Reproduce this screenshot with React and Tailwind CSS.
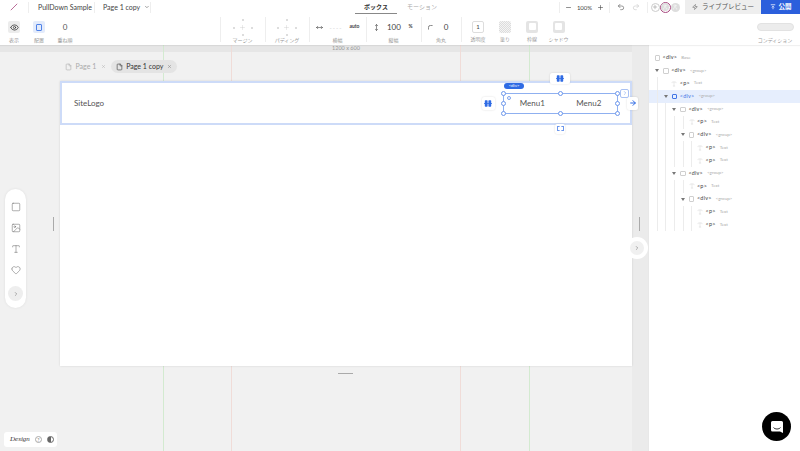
import React from 'react';
import { ArrowRight, ChevronDown, ChevronRight, Eye, File, Heart, Image, Minus, MoveHorizontal, MoveVertical, Plus, Redo2, Square, Type, Undo2, User, X, Zap } from 'lucide-react';

const jp = "font-['Lato','Noto_Sans_CJK_JP',sans-serif]";

const ToolItem = ({ label, w, top = 'pt-[3.5px]', children }) => (
  <div className={`${w} ${top} flex flex-col items-center shrink-0`}>
    <div className="w-full h-[19px] flex items-center justify-center">{children}</div>
    <span className="text-[5px] leading-[6px] text-[#9a9a9a] whitespace-nowrap">{label}</span>
  </div>
);

const Spacing = () => (
  <div className="relative w-[20px] h-[17px] text-[#c4c4c4]">
    <span className="absolute left-[9px] top-0 w-[2px] h-[2px] rounded-full bg-[#d2d2d2]" />
    <span className="absolute left-[9px] bottom-0 w-[2px] h-[2px] rounded-full bg-[#d2d2d2]" />
    <span className="absolute left-0 top-[8px] w-[2px] h-[2px] rounded-full bg-[#d2d2d2]" />
    <span className="absolute right-0 top-[8px] w-[2px] h-[2px] rounded-full bg-[#d2d2d2]" />
    <Plus className="absolute left-[6px] top-[5px] w-[7px] h-[7px]" strokeWidth={1.25} />
  </div>
);

const rows = [
  { depth: 0, tag: '<div>', note: 'Base' },
  { depth: 1, tag: '<div>', note: '<group>', arrow: true },
  { depth: 2, tag: '<p>', note: 'Text', text: true, skip: 1 },
  { depth: 2, tag: '<div>', note: '<group>', arrow: true, selected: true },
  { depth: 3, tag: '<div>', note: '<group>', arrow: true },
  { depth: 4, tag: '<p>', note: 'Text', text: true },
  { depth: 4, tag: '<div>', note: '<group>', arrow: true },
  { depth: 5, tag: '<p>', note: 'Text', text: true },
  { depth: 5, tag: '<p>', note: 'Text', text: true },
  { depth: 3, tag: '<div>', note: '<group>', arrow: true },
  { depth: 4, tag: '<p>', note: 'Text', text: true },
  { depth: 4, tag: '<div>', note: '<group>', arrow: true },
  { depth: 5, tag: '<p>', note: 'Text', text: true },
  { depth: 5, tag: '<p>', note: 'Text', text: true },
];

const TreeRow = ({ row }) => {
  const slots = Array.from({ length: row.depth }, (_, i) => i);
  return (
    <div className={`h-[12.85px] flex items-center pl-[4px] ${row.selected ? 'bg-[#e6eefd]' : ''}`}>
      {slots.map((i) => {
        const isArrow = row.arrow && i === row.depth - 1;
        const noLine = isArrow || row.skip === i;
        return (
          <span key={i} className="relative w-[8.6px] h-full shrink-0 flex items-center justify-center">
            {isArrow && <span className="w-0 h-0 border-x-[2px] border-x-transparent border-t-[3px] border-t-[#777]" />}
            {!noLine && <span className="w-px h-full bg-[#ececec]" />}
          </span>
        );
      })}
      <span className="w-[8.6px] shrink-0 flex items-center justify-center">
        {row.text ? (
          <Type className="w-[6px] h-[6px] text-[#c8c8c8]" strokeWidth={1.5} />
        ) : (
          <span className={`w-[5.5px] h-[5.5px] rounded-[1px] border ${row.selected ? 'border-[#3f74e6]' : 'border-[#cfcfcf]'}`} />
        )}
      </span>
      <span className={`ml-[1px] text-[5.5px] leading-none tracking-[0.2px] ${row.selected ? 'text-[#3f74e6]' : 'text-[#444]'}`}>{row.tag}</span>
      <span className="ml-[4px] text-[4.5px] leading-none text-[#aaa]">{row.note}</span>
    </div>
  );
};

const Dot = ({ className }) => (
  <span className={`absolute w-[5px] h-[5px] rounded-full bg-white border border-[#6d97ec] ${className}`} />
);

const PauseMark = () => (
  <svg viewBox="0 0 10 8" className="w-[8px] h-[7px] text-[#2f6be4]" fill="currentColor">
    <rect x="1" y="0" width="3.500" height="8" rx="0.8" />
    <rect x="5.500" y="0" width="3.500" height="8" rx="0.8" />
    <rect x="0" y="3.500" width="10" height="1" />
  </svg>
);

const App = () => {
  return (
    <div className={`w-[800px] h-[451px] overflow-hidden flex flex-col bg-[#f1f1f1] text-[#444] ${jp}`}>
      {/* top bar */}
      <header className="h-[14px] shrink-0 bg-white flex items-center text-[7px] relative z-20">
        <div className="w-[29px] h-[11px] flex items-center justify-center border-r border-[#eee]">
          <svg viewBox="0 0 10 10" className="w-[8px] h-[8px]"><path d="M1 9 9 1" stroke="#a8487f" strokeWidth="1" /></svg>
        </div>
        <span className="w-[66px] h-[11px] pl-[9px] border-r border-[#eee] leading-[11px] whitespace-nowrap">PullDown Sample</span>
        <div className="w-[56px] h-[11px] pl-[8px] border-r border-[#eee] flex items-center gap-[4px] whitespace-nowrap">
          Page 1 copy <ChevronDown className="w-[6px] h-[6px]" />
        </div>
        <div className="absolute left-[355px] top-0 h-[14px] w-[42px] border-b border-[#888] flex items-center justify-center text-[6px] font-bold text-[#333]">ボックス</div>
        <span className="absolute left-[407px] top-[3px] text-[6px] text-[#aaa] leading-[8px]">モーション</span>
        <div className="ml-auto flex items-center h-full">
          <div className="w-[51px] h-[11px] border-x border-[#eee] flex items-center justify-between px-[5px] text-[6px]">
            <Minus className="w-[7px] h-[7px]" />100%<Plus className="w-[7px] h-[7px]" />
          </div>
          <div className="w-[38px] h-[11px] border-r border-[#eee] flex items-center justify-center gap-[7px]">
            <Undo2 className="w-[8px] h-[8px] text-[#666]" />
            <Redo2 className="w-[8px] h-[8px] text-[#ccc]" />
          </div>
          <div className="w-[37px] pl-[2.5px] flex items-center">
            <span className="w-[9px] h-[9px] rounded-full border border-[#ccc] flex items-center justify-center"><Plus className="w-[6px] h-[6px] text-[#888]" /></span>
            <span className="w-[11px] h-[11px] rounded-full border border-[#a8487f] bg-white flex items-center justify-center"><span className="w-[8px] h-[8px] rounded-full bg-[#ddd] flex items-center justify-center"><User className="w-[6px] h-[6px] text-white" /></span></span>
            <span className="w-[9px] h-[9px] rounded-full bg-[#ddd] flex items-center justify-center"><User className="w-[6px] h-[6px] text-white" /></span>
          </div>
          <div className="w-[76px] h-full bg-[#eeeeee] flex items-center justify-center gap-[4px] text-[6.5px] text-[#555]">
            <Zap className="w-[6px] h-[6px]" />ライブプレビュー
          </div>
          <div className="w-[39px] h-full bg-[#2b5fdc] flex items-center justify-center gap-[3px] text-[6.5px] text-white font-bold">
            <svg viewBox="0 0 8 8" className="w-[6px] h-[6px]"><path d="M1 1h6M4 7V3M2.500 4.500 4 3l1.500 1.500" stroke="white" fill="none" /></svg>公開
          </div>
        </div>
      </header>

      {/* property toolbar */}
      <div className="h-[31px] shrink-0 bg-white flex items-start pl-[1.5px] shadow-[0_1px_1px_rgba(0,0,0,0.06)] relative z-20">
        <ToolItem label="表示" w="w-[25px]">
          <span className="w-[12px] h-[12px] rounded-[2px] bg-[#ececec] flex items-center justify-center"><Eye className="w-[9px] h-[9px] text-[#333]" /></span>
        </ToolItem>
        <ToolItem label="配置" w="w-[25px]">
          <span className="w-[12px] h-[12px] rounded-[2px] bg-[#e3ebfb] flex items-center justify-center"><span className="w-[6px] h-[7px] rounded-[1px] border border-[#4f82e8]" /></span>
        </ToolItem>
        <ToolItem label="重ね順" w="w-[27px]"><span className="text-[8px] text-[#555]">0</span></ToolItem>
        <div className="w-[141px] shrink-0" />
        <div className="w-[45px] h-[25px] mt-[3px] border-l border-[#eee]">
          <ToolItem label="マージン" w="w-full" top="pt-[0.5px]"><Spacing /></ToolItem>
        </div>
        <div className="w-[44px] h-[25px] mt-[3px] border-l border-[#eee]">
          <ToolItem label="パディング" w="w-full" top="pt-[0.5px]"><Spacing /></ToolItem>
        </div>
        <div className="w-[57px] h-[25px] mt-[3px] border-l border-[#eee]">
          <ToolItem label="横幅" w="w-full" top="pt-[0.5px]">
            <div className="w-full flex items-center justify-between px-[6px]">
              <MoveHorizontal className="w-[7px] h-[7px]" />
              <span className="text-[6px] text-[#ccc] tracking-[1px]">----</span>
              <span className="text-[5px] font-bold">auto</span>
            </div>
          </ToolItem>
        </div>
        <div className="w-[55px] h-[25px] mt-[3px] border-l border-[#eee]">
          <ToolItem label="縦幅" w="w-full" top="pt-[0.5px]">
            <div className="w-full flex items-center justify-between px-[6px] pr-[8px]">
              <MoveVertical className="w-[7px] h-[7px]" />
              <span className="text-[8px]">100</span>
              <span className="text-[5px] font-bold">%</span>
            </div>
          </ToolItem>
        </div>
        <div className="w-[40px] h-[25px] mt-[3px] border-l border-[#eee]">
          <ToolItem label="角丸" w="w-full" top="pt-[0.5px]">
            <div className="flex items-center gap-[11px] mr-[6px]">
              <svg viewBox="0 0 6 6" className="w-[5px] h-[5px]"><path d="M.5 5.500V3A2.500 2.500 0 0 1 3 .5h2.500" stroke="#666" fill="none" /></svg>
              <span className="text-[8px]">0</span>
            </div>
          </ToolItem>
        </div>
        <div className="h-[25px] mt-[3px] border-l border-[#eee] pl-[3px] flex">
          <ToolItem label="透明度" w="w-[27px]" top="pt-[0.5px]">
            <span className="w-[12px] h-[12px] rounded-[2px] border border-[#ddd] flex items-center justify-center text-[6px]">1</span>
          </ToolItem>
          <ToolItem label="塗り" w="w-[27px]" top="pt-[0.5px]">
            <span className="w-[12px] h-[12px] rounded-[2px] bg-[repeating-conic-gradient(#dcdcdc_0_25%,#f4f4f4_0_50%)] bg-[length:2px_2px]" />
          </ToolItem>
          <ToolItem label="枠線" w="w-[27px]" top="pt-[0.5px]">
            <span className="w-[12px] h-[12px] rounded-[2px] bg-[#e4e4e4] flex items-center justify-center"><span className="w-[7px] h-[7px] bg-white rounded-[1px]" /></span>
          </ToolItem>
          <ToolItem label="シャドウ" w="w-[26px]" top="pt-[0.5px]">
            <span className="w-[12px] h-[12px] rounded-[2px] bg-[#e4e4e4] flex items-center justify-center"><span className="w-[7px] h-[7px] bg-white rounded-[1px]" /></span>
          </ToolItem>
        </div>
        <div className="ml-auto mr-[5px]">
          <ToolItem label="コンディション" w="w-[40px]">
            <span className="w-[37px] h-[8px] rounded-full bg-[#ececec] border border-[#e2e2e2]" />
          </ToolItem>
        </div>
      </div>

      <div className="flex-1 flex min-h-0">
        {/* canvas */}
        <main className="relative w-[648px] h-full overflow-hidden">
          <div className="h-[7px] bg-[#e6e6e6] text-[5.5px] leading-[7px] text-[#999] text-center pl-[44px]">1200 x 600</div>

          {/* guide lines */}
          <span className="absolute left-[163px] top-0 bottom-0 w-px bg-[#d3ead0]" />
          <span className="absolute left-[231px] top-0 bottom-0 w-px bg-[#f0dcd8]" />
          <span className="absolute left-[460px] top-0 bottom-0 w-px bg-[#f0dcd8]" />
          <span className="absolute left-[529px] top-0 bottom-0 w-px bg-[#d3ead0]" />
          <span className="absolute left-[632px] top-0 bottom-0 w-[16px] bg-[#ebebeb]" />

          {/* page tabs */}
          <div className="relative h-[29px] pl-[65px] flex items-center gap-[5px] text-[7px]">
            <div className="flex items-center gap-[3.5px] text-[#aaa]">
              <File className="w-[7px] h-[8px]" />Page 1<X className="w-[5px] h-[5px] ml-[1px]" />
            </div>
            <div className="h-[13px] px-[5px] rounded-full bg-[#e4e4e4] flex items-center gap-[3.5px] text-[#333]">
              <File className="w-[7px] h-[8px]" />Page 1 copy<X className="w-[5px] h-[5px] text-[#777]" />
            </div>
          </div>

          {/* artboard */}
          <div className="relative ml-[60px] w-[572px] h-[285px] bg-white shadow-[0_0_2px_rgba(0,0,0,0.12)]">
            <div className="relative h-[44px] border-2 border-[#cddbf8] flex items-center pl-[12px] pr-[12px] text-[8px] text-[#555]">
              <span>SiteLogo</span>
              <div className="relative ml-auto w-[115px] h-[21px] flex items-center border border-[#8fb0f0]">
                <span className="flex-1 text-center">Menu1</span>
                <span className="flex-1 text-center">Menu2</span>
                <Dot className="-left-[3px] -top-[3px]" />
                <Dot className="left-[54px] -top-[3px]" />
                <Dot className="-right-[3px] -top-[3px]" />
                <Dot className="-left-[3px] top-[7px]" />
                <Dot className="-right-[3px] top-[7px]" />
                <Dot className="-left-[3px] -bottom-[3px]" />
                <Dot className="left-[54px] -bottom-[3px]" />
                <Dot className="-right-[3px] -bottom-[3px]" />
                <span className="absolute left-[3px] top-[2px] w-[4px] h-[4px] rounded-full border border-[#7fa3ee]" />
                <span className="absolute left-0 -top-[11px] w-[20px] h-[6px] rounded-full bg-[#2f6be4] text-white text-[4.5px] leading-[6px] text-center">&lt;div&gt;</span>
                <span className="absolute left-[46px] -top-[21px] w-[20px] h-[11px] rounded-[2px] bg-white shadow-[0_0_2px_rgba(0,0,0,0.15)] flex items-center justify-center"><PauseMark /></span>
                <span className="absolute -left-[22.500px] top-[3px] w-[13px] h-[13px] rounded-[2px] bg-white shadow-[0_0_2px_rgba(0,0,0,0.15)] flex items-center justify-center"><PauseMark /></span>
                <span className="absolute -right-[21px] top-[3px] w-[11px] h-[13px] rounded-[2px] bg-white shadow-[0_0_2px_rgba(0,0,0,0.15)] flex items-center justify-center"><ArrowRight className="w-[8px] h-[8px] text-[#2f6be4]" strokeWidth={3} /></span>
                <span className="absolute -right-[12px] -top-[5px] w-[9px] h-[9px] rounded-[2px] bg-white border border-[#a9c1f3] flex items-center justify-center"><ChevronRight className="w-[6px] h-[6px] text-[#6d97ec]" /></span>
                <span className="absolute left-[51px] -bottom-[21px] w-[10px] h-[10px] rounded-[2px] bg-white shadow-[0_0_2px_rgba(0,0,0,0.15)] flex items-center justify-center"><span className="w-[7px] h-[5px] border border-dashed border-[#6d97ec]" /></span>
              </div>
            </div>
          </div>

          {/* resize grips */}
          <span className="absolute left-[53px] top-[172px] w-px h-[14px] bg-[#aaa]" />
          <span className="absolute left-[639px] top-[172px] w-px h-[14px] bg-[#aaa]" />
          <span className="absolute left-[338px] top-[328px] w-[15px] h-px bg-[#aaa]" />

          {/* tool pill */}
          <div className="absolute left-[5px] top-[144px] w-[21px] h-[119px] rounded-full bg-white shadow-[0_0_3px_rgba(0,0,0,0.08)] flex flex-col items-center pt-[13px] gap-[11px] text-[#666]">
            <Square className="w-[10px] h-[10px]" strokeWidth={1.25} />
            <Image className="w-[10px] h-[10px]" strokeWidth={1.25} />
            <Type className="w-[10px] h-[10px]" strokeWidth={1.25} />
            <Heart className="w-[10px] h-[10px]" strokeWidth={1.25} />
            <span className="w-[15px] h-[15px] rounded-full bg-[#eeeeee] flex items-center justify-center"><ChevronRight className="w-[6px] h-[6px]" /></span>
          </div>

          {/* right collapse */}
          <span className="absolute left-[626px] top-[192px] w-[22px] h-[22px] rounded-full bg-white flex items-center justify-center">
            <span className="w-[14px] h-[14px] rounded-full bg-[#f0f0f0] flex items-center justify-center"><ChevronRight className="w-[6px] h-[6px] text-[#666]" /></span>
          </span>

          {/* design badge */}
          <div className="absolute left-[4px] top-[387px] w-[53px] h-[15px] rounded-[3px] bg-white flex items-center pl-[6px] gap-[5px] text-[#777]">
            <span className="text-[7px] italic font-['Liberation_Serif',serif] text-[#333]">Design</span>
            <span className="w-[7px] h-[7px] rounded-full border border-[#aaa] text-[5px] leading-[6px] text-center">?</span>
            <span className="w-[7px] h-[7px] rounded-full border border-[#666] bg-[linear-gradient(90deg,#666_50%,#fff_50%)]" />
          </div>
        </main>

        {/* layer tree */}
        <aside className="relative w-[152px] h-full bg-white border-l border-[#e8e8e8] pt-[6.5px] overflow-hidden z-10">
          {rows.map((row, i) => <TreeRow key={i} row={row} />)}
          <span className="absolute left-[113px] top-[367px] w-[29px] h-[29px] rounded-full bg-black flex items-center justify-center">
            <svg viewBox="0 0 14 14" className="w-[14px] h-[14px]">
              <path d="M1 2.500A1.500 1.500 0 0 1 2.500 1h9A1.500 1.500 0 0 1 13 2.500V13l-3-1.500H2.500A1.500 1.500 0 0 1 1 10Z" fill="white" />
              <path d="M3.500 7.500C5 9.500 9 9.500 10.500 7.500" stroke="black" fill="none" strokeWidth="0.8" />
            </svg>
          </span>
        </aside>
      </div>
    </div>
  );
};

export default App;
